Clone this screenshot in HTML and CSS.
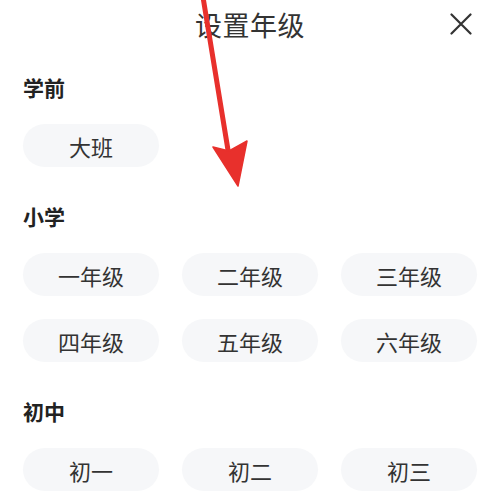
FILE: index.html
```html
<!DOCTYPE html>
<html lang="zh-CN">
<head>
<meta charset="utf-8">
<title>设置年级</title>
<link rel="stylesheet" href="styles.css">
</head>
<body>
<div class="sheet">
  <header class="header">
    <h1 class="title">设置年级</h1>
    <button class="close" aria-label="关闭">
      <svg width="22" height="22" viewBox="0 0 22 22"><path d="M1.5 1.5 L20.5 20.5 M20.5 1.5 L1.5 20.5" stroke="#333" stroke-width="2.2" stroke-linecap="round" fill="none"/></svg>
    </button>
  </header>

  <section class="section first">
    <h2 class="label">学前</h2>
    <div class="grid">
      <div class="chip">大班</div>
    </div>
  </section>

  <section class="section">
    <h2 class="label">小学</h2>
    <div class="grid">
      <div class="chip">一年级</div>
      <div class="chip">二年级</div>
      <div class="chip">三年级</div>
      <div class="chip">四年级</div>
      <div class="chip">五年级</div>
      <div class="chip">六年级</div>
    </div>
  </section>

  <section class="section">
    <h2 class="label">初中</h2>
    <div class="grid">
      <div class="chip">初一</div>
      <div class="chip">初二</div>
      <div class="chip">初三</div>
    </div>
  </section>

  <svg class="arrow" width="487" height="200" viewBox="0 0 487 200">
    <line x1="202.5" y1="-6" x2="228" y2="150" stroke="#e8302c" stroke-width="5" stroke-linecap="round"/>
    <path d="M213 147 L229 151 L247 141 L238 186 Z" fill="#e8302c" stroke="#e8302c" stroke-width="1.5" stroke-linejoin="round"/>
  </svg>
</div>
</body>
</html>
```

FILE: styles.css
```css
html, body {
  margin: 0;
  padding: 0;
  overflow: hidden;
  background: #ffffff;
}

body {
  font-family: "Noto Sans CJK SC", "Noto Sans", sans-serif;
  color: #333;
}

.sheet {
  position: relative;
  width: 500px;
  height: 494px;
  box-sizing: border-box;
  padding: 0 23px;
}

.header {
  position: relative;
  height: 50px;
  display: flex;
  align-items: center;
  justify-content: center;
}

.title {
  margin: 0;
  font-size: 27px;
  font-weight: 400;
  line-height: 50px;
  color: #333;
  letter-spacing: 0.5px;
}

.close {
  position: absolute;
  right: 5px;
  top: 13px;
  padding: 0;
  border: none;
  background: none;
  width: 22px;
  height: 22px;
  display: block;
}

.close svg {
  display: block;
}

.section {
  margin-top: 35px;
}

.section.first {
  margin-top: 23px;
}

.label {
  margin: 0 0 21px 0;
  font-size: 21px;
  line-height: 28px;
  padding-bottom: 2px;
  font-weight: 700;
  color: #222;
}

.grid {
  display: grid;
  grid-template-columns: repeat(3, 136px);
  column-gap: 23px;
  row-gap: 23px;
}

.chip {
  height: 43px;
  border-radius: 22px;
  background: #f6f7f9;
  display: flex;
  align-items: center;
  justify-content: center;
  font-size: 22px;
  color: #333;
}

.arrow {
  position: absolute;
  left: 0;
  top: 0;
  pointer-events: none;
}
```
